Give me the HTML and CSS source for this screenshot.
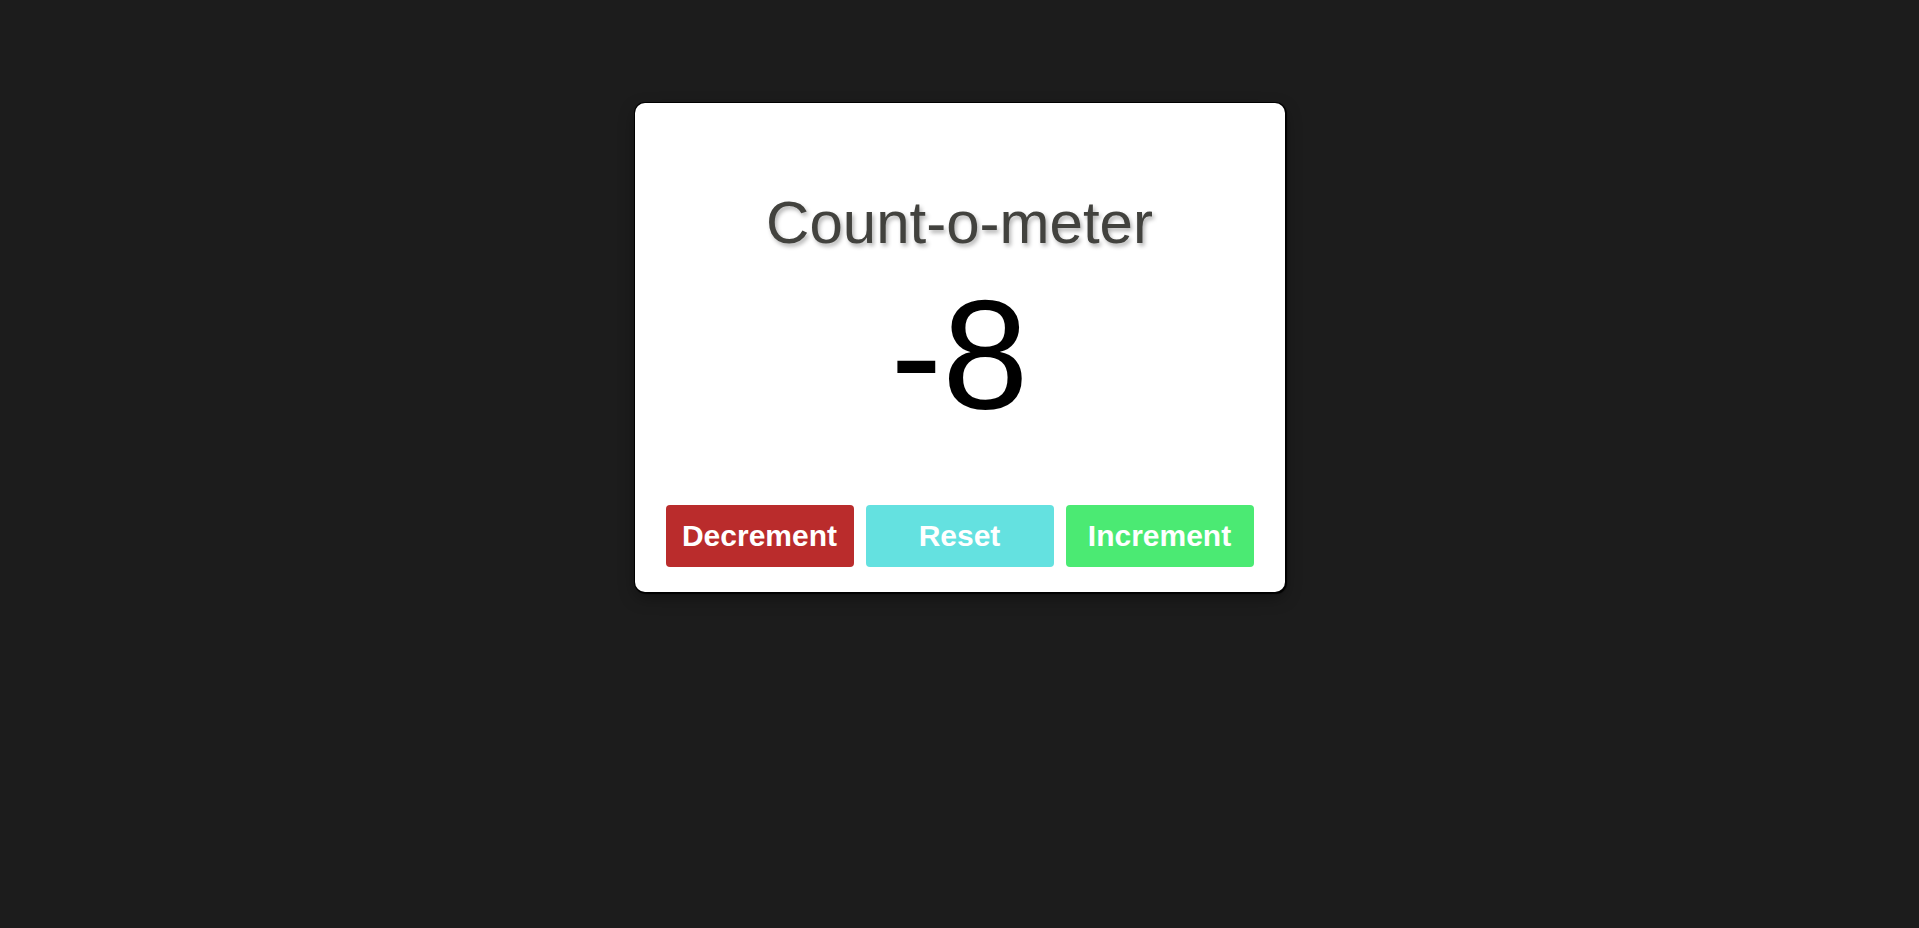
FILE: index.html
```html
<!DOCTYPE html>
<html lang="en">
<head>
<meta charset="utf-8">
<title>Count-o-meter</title>
<link rel="stylesheet" href="styles.css">
</head>
<body>
<main class="card">
  <h1 class="title">Count-o-meter</h1>
  <div class="count">-8</div>
  <div class="buttons">
    <button class="btn btn-dec">Decrement</button>
    <button class="btn btn-reset">Reset</button>
    <button class="btn btn-inc">Increment</button>
  </div>
</main>
</body>
</html>
```
FILE: styles.css
```css
html, body {
  margin: 0;
  padding: 0;
}
body {
  background: #1c1c1c;
  font-family: "Liberation Sans", Arial, sans-serif;
  min-height: 100vh;
  padding-top: 103px;
  box-sizing: border-box;
}
.card {
  width: 650px;
  box-sizing: border-box;
  margin: 0 auto;
  background: #ffffff;
  border-radius: 10px;
  padding: 86px 31px 25px;
  box-shadow: 0 0 0 1px #000, 1px 1px 1px 1px #000, 0 6px 16px rgba(0, 0, 0, 0.35);
  text-align: center;
}
.title {
  margin: 0;
  font-size: 60px;
  font-weight: normal;
  line-height: 67px;
  color: #42423e;
  text-shadow: 2px 3px 4px rgba(0, 0, 0, 0.3);
}
.count {
  margin-top: 12px;
  font-size: 155px;
  line-height: 174px;
  color: #000;
}
.buttons {
  margin-top: 63px;
  display: flex;
  gap: 12px;
}
.btn {
  width: 188px;
  height: 62px;
  border: none;
  border-radius: 4px;
  font-family: "Liberation Sans", Arial, sans-serif;
  font-weight: bold;
  font-size: 30px;
  color: #ffffff;
  padding: 0;
}
.btn-dec { background: #ba2c2c; }
.btn-reset { background: #64e1e0; }
.btn-inc { background: #4bea73; }
```
